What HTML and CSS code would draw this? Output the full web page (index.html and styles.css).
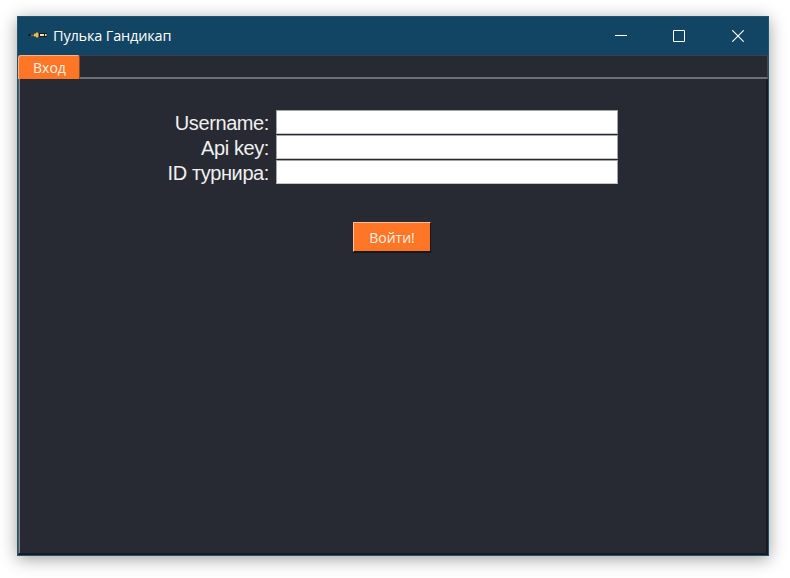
FILE: index.html
```
<!DOCTYPE html>
<html lang="ru">
<head>
<meta charset="utf-8">
<title>Пулька Гандикап</title>
<link rel="stylesheet" href="styles.css">
</head>
<body>
<main class="window">
  <header class="titlebar">
    <svg class="app-icon" width="20" height="8" viewBox="0 0 20 8">
      <path d="M0 3h7v2H0z" fill="#10222c"/>
      <path d="M3 3.5h3V2h2V1h2v1h1v4h-1v1H8V6H6V5H3z" fill="#8a7642"/>
      <path d="M6 3h2V2h2v4H8V5H6z" fill="#e0bd62"/>
      <path d="M11 2h8v4h-8z" fill="#14191c"/>
      <path d="M12 3h4v2h-4z" fill="#ffdda0"/>
      <path d="M17 3h1.5v2H17z" fill="#e8e2d0"/>
    </svg>
    <h1 class="title">Пулька Гандикап</h1>
    <div class="controls">
      <svg width="12" height="12" viewBox="0 0 12 12"><path d="M0 5.5h12" stroke="#fff"/></svg>
      <svg width="12" height="12" viewBox="0 0 12 12"><path d="M.5.5h11v11H.5z" fill="none" stroke="#fff"/></svg>
      <svg width="12" height="12" viewBox="0 0 12 12"><path d="M.3.3l11.4 11.4M11.7.3L.3 11.7" stroke="#fff" stroke-width="1.1"/></svg>
    </div>
  </header>
  <nav class="tabs"><div class="tab">Вход</div></nav>
  <form class="pane">
    <div class="fields">
      <label for="user">Username:</label><input id="user" type="text">
      <label for="key">Api key:</label><input id="key" type="text">
      <label for="tid">ID турнира:</label><input id="tid" type="text">
    </div>
    <button class="submit" type="button">Войти!</button>
  </form>
</main>
</body>
</html>
```
FILE: styles.css
```
* { box-sizing: border-box; }

body {
  margin: 0;
  height: 578px;
  padding: 16px 0 0 17px;
  background: #fff;
  overflow: hidden;
}

.window {
  display: flex;
  flex-direction: column;
  width: 752px;
  height: 540px;
  border: 1px solid #1f5573;
  background: #282a33;
  box-shadow: 0 3px 16px rgba(0, 0, 0, .38);
}

.titlebar {
  display: flex;
  align-items: center;
  height: 38px;
  padding: 0 24px 0 10px;
  background: #124463;
}

.app-icon { flex: none; margin-top: -2px; }

.title {
  margin: 0 auto 0 5px;
  font: 400 14.5px/20px "Open Sans", sans-serif;
  letter-spacing: -.17px;
  color: #fff;
}

.controls { display: flex; gap: 47px; }
.controls svg { display: block; }
.controls svg:first-child { margin-right: -1px; }

.tabs {
  height: 24px;
  border-top: 1px solid #3d4048;
  border-right: 1px solid #43464e;
  border-bottom: 2px solid #6d6f75;
}

.tab {
  width: 62px;
  height: 24px;
  margin-top: -1px;
  border: 1px solid #ffb184;
  border-right-color: #8d4826;
  border-bottom: 0;
  border-radius: 3px 3px 0 0;
  background: #ff7626;
  font: 400 14px/23px "Open Sans", sans-serif;
  text-align: center;
  text-indent: 1px;
  color: #fff0e6;
}

.pane {
  display: flex;
  flex: 1;
  flex-direction: column;
  padding: 31px 0 0 1px;
  border-left: 1px solid #565960;
  border-right: 2px solid #1a1b20;
  border-bottom: 2px solid #1a1b20;
  box-shadow: inset 1px 0 0 #85878c;
}

.fields {
  display: grid;
  grid-template-columns: 249px 342px;
  grid-auto-rows: 25px;
  column-gap: 7px;
}

.fields label {
  font: 400 20px/26px "Liberation Sans", Arial, sans-serif;
  letter-spacing: -.4px;
  text-align: right;
  color: #f0f0f0;
}

.fields input {
  width: 342px;
  height: 24px;
  padding: 0 3px;
  border: 1px solid #a4a5a8;
  border-bottom-color: #c4c4c4;
  border-radius: 0;
  outline: 0;
  background: #fff;
  font: 20px "Liberation Sans", Arial, sans-serif;
}

.submit {
  width: 78px;
  height: 30px;
  margin: 37px 0 0 333px;
  padding: 0;
  border: 1px solid #ffc09b;
  border-right: 1px solid #17181c;
  border-bottom: 1px solid #17181c;
  box-shadow: 0 1px 0 #17181c;
  background: #ff7626;
  font: 400 14px/27px "Open Sans", sans-serif;
  color: #fff0e6;
}
```
